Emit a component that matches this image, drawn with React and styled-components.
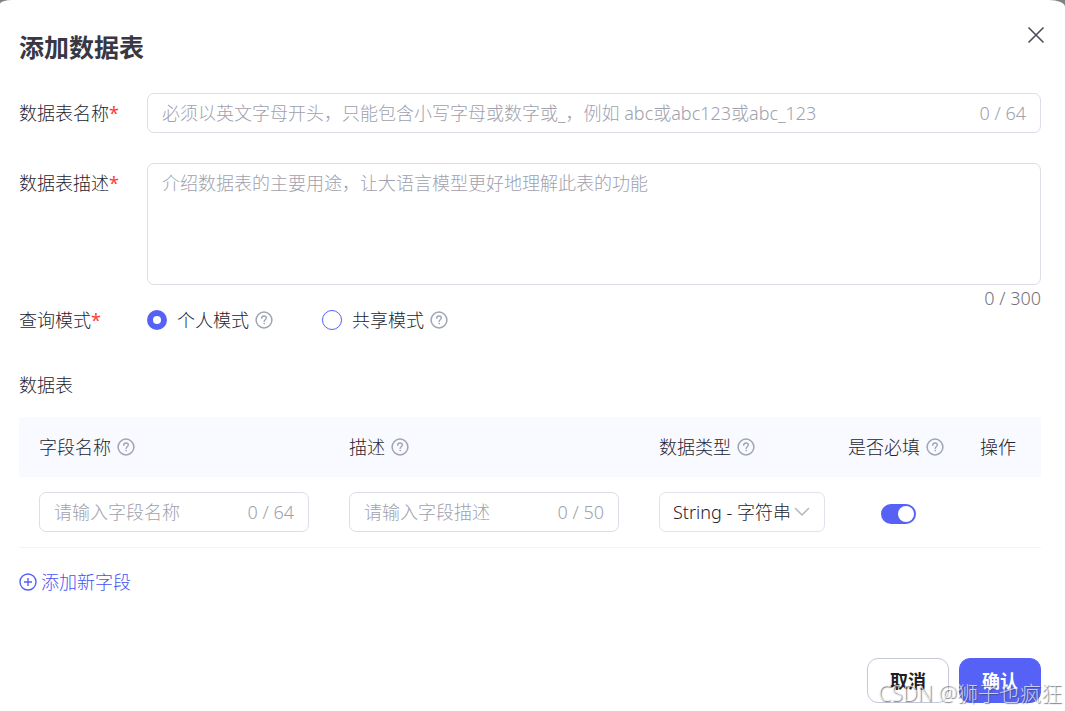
import React, { useState } from "react";
import styled, { createGlobalStyle } from "styled-components";

const GlobalStyle = createGlobalStyle`
  * {
    box-sizing: border-box;
  }
  body {
    margin: 0;
    background: #828282;
    color: #25242e;
    font-family: "Noto Sans", "Noto Sans CJK SC", sans-serif;
    font-size: 18px;
    font-weight: 300;
    line-height: 24px;
  }
  button, input, select, textarea {
    margin: 0;
    font: inherit;
    color: inherit;
  }
`;

const Dialog = styled.form`
  min-height: 100vh;
  padding: 20px 24px 8px 19px;
  background: #fff;
  border-radius: 12px 16px 0 0 / 4px 7px 0 0;
`;

const Header = styled.header`
  display: flex;
  justify-content: space-between;
  align-items: flex-start;
  height: 73px;
`;

const Title = styled.h1`
  margin: 10px 0 0;
  color: #383743;
  font-size: 25px;
  font-weight: 700;
  line-height: 34px;
`;

const CloseButton = styled.button`
  display: flex;
  justify-content: flex-end;
  width: 30px;
  height: 30px;
  margin-right: -4px;
  padding: 6px 0;
  border: 0;
  background: none;
  color: #4f4d5c;
`;

const FormRow = styled.div`
  display: flex;
  align-items: flex-start;
  margin-bottom: ${(p) => p.$gap}px;
`;

const RowLabel = styled.label`
  flex: 0 0 128px;
  padding: ${(p) => (p.$tall ? 8 : 0)}px 0;
`;

const Star = styled.span`
  color: #ff3b30;
  font-weight: 400;
`;

const InputBox = styled.div`
  display: flex;
  flex: 1;
  align-items: center;
  min-width: 0;
  height: 40px;
  padding: 0 14px;
  border: 1px solid #dddde7;
  border-radius: 7px;
  color: #a0a1ad;
  white-space: nowrap;
`;

const TextInput = styled.input`
  flex: 1;
  min-width: 0;
  padding: 0;
  border: 0;
  outline: 0;
  background: none;
  color: #25242e;
  &::placeholder {
    color: #a0a1ad;
    opacity: 1;
  }
`;

const AreaColumn = styled.div`
  display: flex;
  flex: 1;
  flex-direction: column;
`;

const TextArea = styled.textarea`
  width: 100%;
  height: 122px;
  padding: 7px 14px;
  border: 1px solid #dddde7;
  border-radius: 7px;
  outline: 0;
  resize: none;
  &::placeholder {
    color: #a0a1ad;
    opacity: 1;
  }
`;

const AreaCount = styled.span`
  align-self: flex-end;
  height: 23px;
  padding-top: 1px;
  color: #72727e;
`;

const RadioGroup = styled.div`
  display: flex;
  gap: 49px;
`;

const RadioItem = styled.div`
  display: flex;
  align-items: center;
  gap: 6px;
`;

const RadioLabel = styled.label`
  display: flex;
  align-items: center;
  gap: 10px;
`;

const Radio = styled.input`
  appearance: none;
  width: 20px;
  height: 20px;
  border: 1px solid #5662f6;
  border-radius: 50%;
  background: #fff;
  &:checked {
    border-width: 6px;
  }
`;

const SectionTitle = styled.h2`
  margin: 0 0 20px;
  font-size: 18px;
  font-weight: 300;
`;

const Table = styled.table`
  width: 100%;
  table-layout: fixed;
  border-collapse: collapse;
`;

const Col = styled.col`
  width: ${(p) => (p.$width ? `${p.$width}px` : "auto")};
`;

const Th = styled.th`
  height: 60px;
  padding: 0 0 0 20px;
  background: #f8faff;
  font-weight: 300;
  text-align: left;
  white-space: nowrap;
`;

const HeadCell = styled.div`
  display: flex;
  align-items: center;
  gap: 6px;
`;

const Td = styled.td`
  height: 70px;
  padding: 0 20px;
  border-bottom: 1px solid #f4f4f7;
`;

const SelectBox = styled.div`
  display: grid;
  align-items: center;
  width: 166px;
  & > * {
    grid-area: 1 / 1;
  }
  svg {
    justify-self: end;
    margin-right: 15px;
    pointer-events: none;
  }
`;

const Select = styled.select`
  appearance: none;
  width: 100%;
  height: 40px;
  padding: 0 13px;
  border: 1px solid #e2e2ea;
  border-radius: 7px;
  background: #fff;
`;

const SwitchWrap = styled.div`
  display: flex;
  padding: 5px 0 0 33px;
`;

const Switch = styled.input`
  appearance: none;
  display: flex;
  justify-content: flex-start;
  width: 35px;
  height: 20px;
  padding: 2px;
  border-radius: 10px;
  background: #c6c8d4;
  &::before {
    content: "";
    width: 16px;
    height: 16px;
    border-radius: 50%;
    background: #fff;
  }
  &:checked {
    justify-content: flex-end;
    background: #5662f6;
  }
`;

const AddButton = styled.button`
  display: flex;
  align-items: center;
  gap: 4px;
  margin-top: 22px;
  padding: 0;
  border: 0;
  background: none;
  color: #4552f2;
`;

const Footer = styled.footer`
  display: flex;
  justify-content: flex-end;
  gap: 10px;
  margin-top: 64px;
`;

const FooterButton = styled.button`
  width: 82px;
  height: 45px;
  padding: 2px 0 0;
  border: 1px solid ${(p) => (p.$primary ? "#5662f6" : "#c5c8d6")};
  border-radius: 11px;
  background: ${(p) => (p.$primary ? "#5662f6" : "#fff")};
  color: ${(p) => (p.$primary ? "#fff" : "#1d1c23")};
  font-weight: 700;
`;

const Watermark = styled.div`
  position: absolute;
  right: 3px;
  bottom: 4px;
  color: rgba(255, 255, 255, 0.7);
  font-size: 21px;
  line-height: 28px;
  text-shadow: 1px 1px 1px rgba(70, 70, 80, 0.7);
  pointer-events: none;
`;

const HelpIcon = () => (
  <svg width="18" height="18" viewBox="0 0 18 18" fill="none" stroke="#a0a4b3" strokeLinecap="round" strokeLinejoin="round">
    <circle cx="9" cy="9" r="7.9" strokeWidth="1.5" />
    <path d="M6.7 7.2C6.7 5.8 7.7 5 9 5s2.3.8 2.3 2.1c0 1.6-2.2 1.7-2.2 3.4" strokeWidth="1.4" />
    <circle cx="9.1" cy="12.7" r=".4" fill="#a0a4b3" strokeWidth=".8" />
  </svg>
);

const CloseIcon = () => (
  <svg width="18" height="18" viewBox="0 0 18 18" fill="none" stroke="currentColor" strokeWidth="1.6">
    <path d="M1.5 1.5l15 15M16.5 1.5l-15 15" />
  </svg>
);

const ChevronIcon = () => (
  <svg width="16" height="16" viewBox="0 0 16 16" fill="none" stroke="#b4b6c2" strokeWidth="1.5" strokeLinecap="round" strokeLinejoin="round">
    <path d="M1.5 4.5L8 11l6.5-6.5" />
  </svg>
);

const PlusIcon = () => (
  <svg width="18" height="18" viewBox="0 0 18 18" fill="none" stroke="#5662f6" strokeWidth="1.4">
    <circle cx="9" cy="9" r="8" />
    <path d="M9 5v8M5 9h8" />
  </svg>
);

const modes = [
  { id: "personal", label: "个人模式" },
  { id: "shared", label: "共享模式" },
];

const columns = [
  { label: "字段名称", help: true },
  { label: "描述", help: true },
  { label: "数据类型", help: true, width: 189 },
  { label: "是否必填", help: true, width: 132 },
  { label: "操作", width: 81 },
];

const CountedInput = ({ max, ...rest }) => {
  const [value, setValue] = useState("");
  return (
    <InputBox>
      <TextInput type="text" value={value} maxLength={max} onChange={(e) => setValue(e.target.value)} {...rest} />
      <span>{value.length} / {max}</span>
    </InputBox>
  );
};

export default function App() {
  const [desc, setDesc] = useState("");
  const [mode, setMode] = useState("personal");
  const [required, setRequired] = useState(true);

  return (
    <>
      <GlobalStyle />
      <Dialog onSubmit={(e) => e.preventDefault()}>
        <Header>
          <Title>添加数据表</Title>
          <CloseButton type="button" aria-label="关闭"><CloseIcon /></CloseButton>
        </Header>
        <FormRow $gap={30}>
          <RowLabel htmlFor="name" $tall>数据表名称<Star>*</Star></RowLabel>
          <CountedInput id="name" max={64} placeholder="必须以英文字母开头，只能包含小写字母或数字或_，例如 abc或abc123或abc_123" />
        </FormRow>
        <FormRow $gap={0}>
          <RowLabel htmlFor="desc" $tall>数据表描述<Star>*</Star></RowLabel>
          <AreaColumn>
            <TextArea
              id="desc"
              maxLength={300}
              value={desc}
              onChange={(e) => setDesc(e.target.value)}
              placeholder="介绍数据表的主要用途，让大语言模型更好地理解此表的功能"
            />
            <AreaCount>{desc.length} / 300</AreaCount>
          </AreaColumn>
        </FormRow>
        <FormRow $gap={41}>
          <RowLabel as="span" id="mode">查询模式<Star>*</Star></RowLabel>
          <RadioGroup role="radiogroup" aria-labelledby="mode">
            {modes.map((m) => (
              <RadioItem key={m.id}>
                <RadioLabel>
                  <Radio type="radio" name="mode" checked={mode === m.id} onChange={() => setMode(m.id)} />
                  {m.label}
                </RadioLabel>
                <HelpIcon />
              </RadioItem>
            ))}
          </RadioGroup>
        </FormRow>
        <SectionTitle>数据表</SectionTitle>
        <Table>
          <colgroup>
            {columns.map((c) => <Col key={c.label} $width={c.width} />)}
          </colgroup>
          <thead>
            <tr>
              {columns.map((c) => (
                <Th key={c.label} scope="col">
                  <HeadCell>{c.label}{c.help && <HelpIcon />}</HeadCell>
                </Th>
              ))}
            </tr>
          </thead>
          <tbody>
            <tr>
              <Td><CountedInput max={64} aria-label="字段名称" placeholder="请输入字段名称" /></Td>
              <Td><CountedInput max={50} aria-label="描述" placeholder="请输入字段描述" /></Td>
              <Td>
                <SelectBox>
                  <Select aria-label="数据类型">
                    <option>String - 字符串</option>
                  </Select>
                  <ChevronIcon />
                </SelectBox>
              </Td>
              <Td>
                <SwitchWrap>
                  <Switch type="checkbox" role="switch" aria-label="是否必填" checked={required} onChange={() => setRequired(!required)} />
                </SwitchWrap>
              </Td>
              <Td />
            </tr>
          </tbody>
        </Table>
        <AddButton type="button"><PlusIcon />添加新字段</AddButton>
        <Footer>
          <FooterButton type="button">取消</FooterButton>
          <FooterButton type="submit" $primary>确认</FooterButton>
        </Footer>
      </Dialog>
      <Watermark>CSDN @狮子也疯狂</Watermark>
    </>
  );
}
